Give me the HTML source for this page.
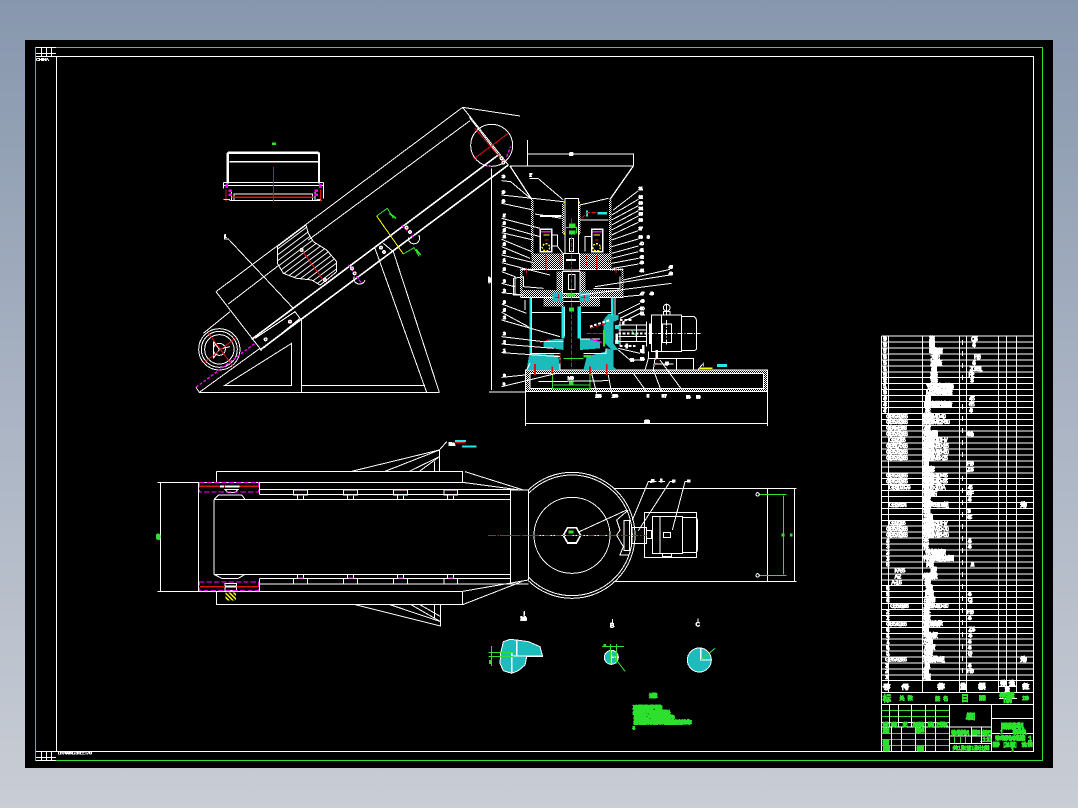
<!DOCTYPE html>
<html lang="zh">
<head>
<meta charset="utf-8">
<title>CAD drawing</title>
<style>
html,body{margin:0;padding:0;width:1078px;height:808px;overflow:hidden;background:linear-gradient(to bottom,#8797ad 0%,#a9b3c3 50%,#c9cdd5 100%)}
svg{position:absolute;left:0;top:0;display:block}
text{font-family:"Liberation Sans","Noto Sans CJK SC",sans-serif;font-weight:bold}
</style>
</head>
<body>
<svg width="1078" height="808" viewBox="0 0 1078 808" xmlns="http://www.w3.org/2000/svg" shape-rendering="crispEdges">
<defs>
<filter id="t" x="-5%" y="-5%" width="110%" height="110%" color-interpolation-filters="sRGB"><feComponentTransfer><feFuncA type="discrete" tableValues="0 1 1 1"/></feComponentTransfer></filter>
<pattern id="chk" width="6" height="6" patternUnits="userSpaceOnUse"><rect width="6" height="6" fill="#000"/><rect width="3" height="3" fill="#fff"/><rect x="3" y="3" width="3" height="3" fill="#fff"/></pattern>
<pattern id="cy" width="6" height="6" patternUnits="userSpaceOnUse"><rect width="6" height="6" fill="#1cbcbc"/></pattern>
<pattern id="hatch" width="14" height="14" patternUnits="userSpaceOnUse" patternTransform="rotate(-37)"><rect width="14" height="14" fill="#000"/><rect width="14" height="3" fill="#fff"/></pattern>
<pattern id="yh" width="9" height="9" patternUnits="userSpaceOnUse" patternTransform="rotate(45)"><rect width="9" height="9" fill="#000"/><rect width="9" height="5" fill="#ff0"/></pattern>
<clipPath id="cc"><rect x="85" y="0" width="800" height="440"/></clipPath>
</defs>
<rect x="25" y="40" width="1028" height="728" fill="#000"/>

<!-- Frames -->
<g fill="none">
<rect x="35.5" y="47.5" width="1007" height="713" stroke="#2fe02f"/>
<rect x="56.5" y="56.5" width="977" height="695" stroke="#fff"/>
<path stroke="#fff" d="M36 47.5H56M36 53.5H56M41.5 48V56M46.5 48V56M51.5 48V56M36 56.5H56M36 751.5H56M36 757.5H56M41.5 752V760M46.5 752V760M51.5 752V760M36 760.5H56"/>
</g>
<g fill="#fff" filter="url(#t)">
<text x="36" y="61" font-size="4.5" textLength="13">CHINA</text>
<text x="58" y="754.5" font-size="4.5" textLength="34">DRAWING SHEET A0</text>
</g>

<!-- Main elevation -->
<g transform="translate(180 100) scale(.33333)" fill="none" stroke="#fff" stroke-width="3">
<path d="M378 375L292 440V490L310 520L350 535L395 540L420 555L440 540L470 515V485L440 450L400 425L385 400Z" fill="url(#hatch)"/>
<path d="M108 575L848 22L1020 48M848 22L985 195M868 52L975 190M108 575L245 752M145 612L295 497M385 420L870 62"/>
<path stroke-width="5" d="M215 718L955 165M240 750L985 195"/>
<path d="M225 715L345 635L360 655L250 745M48 862L58 877H778M58 877L240 745M365 655V877M365 857H735M133 857L335 730V857ZM585 445L740 877M640 455L778 877M610 430L640 455M70 700L150 635"/>
<circle cx="118" cy="748" r="62"/><circle cx="118" cy="748" r="54"/><circle cx="118" cy="748" r="44"/><circle cx="118" cy="748" r="18"/>
<path d="M100 725L118 748M100 775L118 748M150 740L118 748M100 725V775"/>
<circle cx="935" cy="136" r="63"/>
<path d="M133 405V417H145L340 625"/>
<path d="M522 530A17 17 0 1 0 555 540M685 412A17 17 0 1 0 716 405"/>
<path stroke="#e01010" d="M880 178L985 100M885 85L975 190M365 450L430 540M70 790L165 715M85 700L160 800"/>
<path stroke="#f0f" stroke-dasharray="9 5" d="M48 862L225 730M505 495L545 550M665 375L705 415M918 198H935M980 170L992 140" stroke-width="4"/>
<path stroke="#ff0" d="M590 348L670 462"/>
<path stroke="#2fe02f" d="M590 348L622 325L640 355M670 462L702 443L718 470"/>
<path stroke="#2fe02f" stroke-width="5" d="M628 340L648 355M708 448L722 465"/>
<g fill="#e01010" stroke="#fff" stroke-width="4">
<circle cx="365" cy="450" r="4"/><circle cx="435" cy="540" r="4"/><circle cx="680" cy="383" r="4"/><circle cx="690" cy="396" r="4"/><circle cx="516" cy="505" r="4"/><circle cx="524" cy="520" r="4"/><circle cx="603" cy="443" r="4"/><circle cx="612" cy="456" r="4"/><circle cx="330" cy="665" r="4"/><circle cx="257" cy="718" r="4"/><circle cx="965" cy="175" r="4"/><circle cx="970" cy="188" r="4"/>
</g>
</g>

<!-- Cross-section top-left -->
<g transform="translate(190 130) scale(.33333)" fill="none" stroke="#fff" stroke-width="3">
<path stroke-width="7" d="M113 160V74Q113 68 119 68H381Q387 68 387 74V160"/>
<path stroke-width="4" d="M118 95H385"/>
<path d="M100 157H400M100 166H400M100 157V175M400 157V205M132 192H368V212H132ZM118 212H395M125 180V212M375 180V212"/>
<path stroke="#e01010" stroke-width="4" d="M125 202H372"/>
<path stroke="#e01010" d="M250 111V215M108 178V215M391 178V215"/>
<g fill="#f0f" stroke="none"><rect x="107" y="162" width="7" height="12"/><rect x="116" y="178" width="10" height="8"/><rect x="116" y="190" width="10" height="8"/><rect x="374" y="178" width="10" height="8"/><rect x="374" y="190" width="10" height="8"/><rect x="387" y="162" width="7" height="12"/></g>
<path stroke="#ff0" d="M100 208H120M380 208H392"/>
<rect x="246" y="37" width="12" height="8" fill="#2fe02f" stroke="none"/>
</g>
<g fill="#fff" filter="url(#t)"><text x="224" y="238" font-size="5">1</text></g>

<!-- Crusher section -->
<g transform="translate(480 140) scale(.33333)" fill="none" stroke="#fff" stroke-width="3">
<path d="M143 0V80M143 42H460V78M90 78H460"/>
<path stroke-width="4" d="M90 78L155 178M460 78L390 178"/>
<path d="M35 85V750M27 756H136M136 755V858M862 755V858M136 851H862"/>
<g stroke="none" fill="url(#chk)">
<rect x="153" y="178" width="7" height="165"/><rect x="387" y="178" width="7" height="165"/>
<rect x="246" y="190" width="6" height="90"/><rect x="296" y="190" width="6" height="90"/>
<rect x="155" y="340" width="95" height="48"/><rect x="300" y="340" width="95" height="48"/>
<rect x="120" y="386" width="40" height="6"/><rect x="390" y="386" width="40" height="6"/>
<rect x="120" y="388" width="7" height="85"/><rect x="424" y="388" width="7" height="85"/>
<rect x="120" y="450" width="310" height="22"/>
<rect x="230" y="395" width="17" height="55"/><rect x="300" y="395" width="17" height="55"/>
<rect x="190" y="472" width="60" height="28"/><rect x="300" y="472" width="60" height="28"/>
<rect x="136" y="690" width="727" height="9"/><rect x="136" y="745" width="727" height="10"/><rect x="136" y="690" width="14" height="65"/><rect x="850" y="690" width="13" height="65"/>
</g>
<path d="M136 690H863V755H136ZM150 700H850V745H150Z"/>
<path d="M255 175H295V345H255ZM165 222L245 235M300 195L385 175M300 240H385"/>
<path stroke-width="6" d="M180 228H245"/>
<rect x="181" y="268" width="34" height="67" stroke-width="4"/><rect x="335" y="268" width="33" height="67" stroke-width="4"/>
<path d="M215 285H232V318H215M335 290H315V335M232 318L248 340M268 295V335H280V295ZM122 388H430M122 472H430M130 410V440L190 445M130 410L100 415V465H125M420 410V445L340 445"/>
<rect x="250" y="340" width="48" height="50" fill="#000"/>
<path stroke-width="7" d="M258 360H288"/>
<rect x="247" y="395" width="53" height="65" fill="#000"/><rect x="265" y="403" width="20" height="45"/>
<path d="M250 472H300M250 485H300M253 500V590M295 500V590M155 472V640M405 472V525M135 480V510M155 517H245M305 517H395"/>
<!-- cyan -->
<g fill="url(#cy)" stroke="none">
<polygon points="190,605 225,597 250,597 250,630 190,620"/>
<polygon points="300,597 330,597 360,605 360,625 300,630"/>
<polygon points="148,640 235,645 240,690 140,690"/>
<polygon points="380,625 400,630 400,680 412,690 310,690 320,650 375,635"/>
<polygon points="370,540 385,522 415,525 415,540 400,545 400,610 415,630 395,630 370,605"/>
<rect x="218" y="458" width="30" height="28"/><rect x="298" y="458" width="30" height="28"/>
</g>
<g fill="#22e8e8" stroke="none">
<rect x="245" y="500" width="8" height="95"/><rect x="293" y="500" width="10" height="95"/>
<rect x="148" y="472" width="7" height="168"/><rect x="393" y="472" width="7" height="55"/>
<rect x="318" y="212" width="6" height="18"/><rect x="353" y="216" width="28" height="8"/>
<rect x="711" y="672" width="30" height="9"/><rect x="405" y="555" width="12" height="12"/><rect x="405" y="600" width="12" height="12"/>
</g>
<path d="M150 640H240V690M310 640H378V625M140 690L150 670M190 605H250M300 597H360"/>
<!-- red -->
<path stroke="#e01010" stroke-width="5" d="M197 345V390M350 345V390M165 672V705M380 672V705M217 680V700M330 680V705"/>
<path stroke="#e01010" d="M240 345V378M320 345V378M150 365H170M380 365H398M305 235L322 218H350M225 472H245M235 462V482M303 472H323M313 462V482M275 235V690M240 640V670M140 385V405M408 385V405M320 580H372M528 630V670M180 607L215 597M330 565L380 550M195 300H205M345 300H355" stroke-dasharray="14 4"/>
<path stroke="#f0f" stroke-width="4" d="M183 275H213M337 275H366M330 597L365 607"/>
<!-- yellow -->
<path stroke="#ff0" stroke-width="4" d="M190 285H208M340 285H360M660 685H698"/>
<circle cx="198" cy="322" r="11" stroke="#ff0" stroke-width="4" stroke-dasharray="6 4"/><circle cx="350" cy="322" r="11" stroke="#ff0" stroke-width="4" stroke-dasharray="6 4"/>
<g fill="#ff0" stroke="none"><rect x="250" y="184" width="5" height="5"/><rect x="295" y="184" width="5" height="5"/><rect x="250" y="278" width="5" height="5"/><rect x="295" y="278" width="5" height="5"/></g>
<!-- green -->
<g fill="#2fe02f" stroke="none"><rect x="267" y="250" width="20" height="12"/><rect x="267" y="272" width="20" height="12"/><rect x="260" y="460" width="25" height="10"/><rect x="267" y="503" width="15" height="12"/><rect x="310" y="645" width="25" height="8"/><rect x="267" y="725" width="14" height="12"/></g>
<path stroke="#2fe02f" d="M255 262H290V280M250 655H310M217 700V745H330V700M220 735H330M455 572L470 590H475"/>
<path stroke="#2fe02f" stroke-width="5" d="M372 570V620"/>
<!-- gearbox -->
<path d="M415 555H500M415 570H500M415 590H500M415 605H500M420 545V620M500 545V620M470 555V605"/>
<path stroke-width="6" stroke-dasharray="8 5" d="M420 540H455M420 618H470M415 580H500M330 560L390 540"/>
<path stroke-width="5" d="M510 550V612"/>
<path stroke-width="8" d="M430 545V555M410 580V610M440 610V625M490 615V640M530 630V655"/>
<!-- motor -->
<path d="M515 525H605V635H515ZM545 523V635M605 530H642Q650 535 650 545V625Q650 630 642 632H605M548 552H575V607H548ZM560 490V523M550 515H570V525H550ZM505 635V655H640V690M505 655L495 690M525 655L520 690M590 655V690M525 672H580"/>
<circle cx="560" cy="503" r="10"/>
<path stroke-dasharray="16 5 3 5" d="M505 580H662M560 540V620"/>
<path d="M655 688L668 672"/>
<path stroke="#22e8e8" d="M670 668V680"/>
<rect x="555" y="665" width="12" height="10" fill="#fff" stroke="none"/>
<!-- leaders -->
<path d="M65 122L92 125L155 178M65 165L250 185M65 190L160 210M65 235L180 265M65 258L180 290M65 278L160 300M65 298L155 335M65 320L150 355M65 345L160 368M65 368L130 385L210 405M65 395L105 410V465M65 430L103 440M65 458L130 465M65 492L140 520M65 517L145 560M65 540L240 590M65 590L190 605M65 612L220 625M65 638L240 650M65 712L135 705M65 740L230 700M148 116H175L250 180"/>
<path d="M475 152L400 210M475 178L395 225M475 197L395 240M475 212L395 255M475 228L395 270M475 247L395 285M475 272L395 300M475 297L395 320M475 318L395 340M475 335L395 355M475 355L395 370M475 372L400 385M570 388L430 420M570 405L345 440M575 430L300 465M485 465L430 470M480 490L415 522M480 505L420 535M480 520L430 545M480 640L415 625M480 660H450L415 630"/>
<path d="M460 700L500 755M520 690L545 755M540 660L610 755M385 705L395 760M335 700L350 760M175 725L385 722"/>
<g fill="#fff" stroke="#fff" stroke-width="1.2" font-size="15" filter="url(#t)">
<text x="267" y="47" textLength="14">1200</text><text x="147" y="109" textLength="10">17</text>
<text x="65" y="114" textLength="11">30</text><text x="65" y="160" textLength="11">29</text><text x="65" y="187" textLength="11">28</text><text x="68" y="231" textLength="10">27</text><text x="68" y="254" textLength="10">26</text><text x="68" y="274" textLength="10">25</text><text x="68" y="294" textLength="10">24</text><text x="68" y="316" textLength="10">23</text><text x="68" y="340" textLength="10">22</text><text x="68" y="364" textLength="10">21</text><text x="68" y="392" textLength="10">20</text><text x="68" y="427" textLength="10">19</text><text x="68" y="456" textLength="10">18</text>
<text x="68" y="490" textLength="10">16</text><text x="68" y="514" textLength="10">15</text><text x="68" y="537" textLength="10">14</text><text x="68" y="585" textLength="10">13</text><text x="68" y="610" textLength="10">12</text><text x="68" y="636" textLength="10">11</text><text x="68" y="711" textLength="10">10</text><text x="68" y="737" textLength="6">9</text>
<text x="475" y="150" textLength="14">31</text><text x="475" y="175" textLength="14">32</text><text x="475" y="194" textLength="14">33</text><text x="475" y="210" textLength="14">34</text><text x="475" y="226" textLength="14">35</text><text x="475" y="245" textLength="14">36</text><text x="475" y="270" textLength="14">37</text><text x="475" y="295" textLength="14">38</text><text x="500" y="295" textLength="10">39</text><text x="478" y="315" textLength="14">40</text><text x="478" y="335" textLength="14">41</text><text x="478" y="355" textLength="14">42</text><text x="478" y="372" textLength="14">43</text><text x="478" y="396" textLength="14">44</text>
<text x="565" y="385" textLength="14">45</text><text x="565" y="405" textLength="14">46</text><text x="480" y="465" textLength="14">47</text><text x="508" y="465" textLength="14">48</text><text x="480" y="487" textLength="14">49</text><text x="480" y="510" textLength="14">50</text><text x="480" y="525" textLength="14">51</text><text x="480" y="637" textLength="14">52</text><text x="480" y="662" textLength="14">53</text><text x="450" y="665" textLength="12">54</text>
<text x="345" y="772" textLength="20">1.55</text><text x="395" y="772" textLength="20">1.56</text><text x="500" y="772" textLength="14">5</text><text x="545" y="772" textLength="16">57</text><text x="618" y="775" textLength="14">58</text><text x="648" y="775" textLength="14">59</text><text x="492" y="849" textLength="18">2300</text>
<text transform="translate(34 430) rotate(-90)" textLength="20">1967</text>
<text x="555" y="677" textLength="10">4</text>
<text x="262" y="718" textLength="20">M30</text>
</g>
</g>

<!-- Plan view left -->
<g transform="translate(150 440) scale(.33333)" fill="none" stroke="#fff" stroke-width="3">
<path d="M22 127H938M22 454H938M31 127V454M146 127V454M200 94H938V127M200 94V127M200 454V494H938V454"/>
<path d="M938 127L1110 150M945 95L1120 150M938 454L1135 420M938 494L1115 425"/>
<path d="M328 148H1082M328 163H1082M192 178H1082M192 403H1082M328 415H1082M328 432H1082M1082 148V432M1135 150V420M1082 150H1135M1082 432H1135M192 178V403M328 127V163M328 415V454"/>
<path d="M192 178L205 165H275L285 178M192 403L215 415H265L285 403M225 148H265L255 158H235ZM225 430H260V452H225Z"/>
<path d="M430 150H472V165H430ZM443 165V178M461 165V178M580 150H622V165H580ZM593 165V178M611 165V178M730 150H772V165H730ZM743 165V178M761 165V178M882 150H922V165H882ZM893 165V178M911 165V178"/>
<path d="M430 415H472V432H430ZM443 403V415M461 403V415M580 415H622V432H580ZM593 403V415M611 403V415M730 415H772V432H730ZM743 403V415M761 403V415M882 415H922V432H882ZM893 403V415M911 403V415"/>
<path stroke="#f0f" d="M445 166H460M595 166H610M745 166H760M895 166H910M445 414H460M595 414H610M745 414H760M895 414H910"/>
<path d="M605 94L868 30V94M705 94L868 30M778 94L868 50M808 94L868 50M853 94V65M615 494L872 558V494M720 494L872 545M783 494L872 545M810 494L872 530M853 494V535"/>
<rect x="148" y="128" width="177" height="28" stroke="#f0f" stroke-dasharray="16 6"/>
<rect x="148" y="426" width="177" height="26" stroke="#f0f" stroke-dasharray="16 6"/>
<path stroke="#e01010" stroke-width="4" d="M150 139H325M150 440H325"/>
<path stroke="#fff" stroke-width="6" d="M210 140H222M225 139H268M225 440H260"/>
<rect x="227" y="458" width="31" height="24" fill="url(#yh)" stroke="none"/>
<path stroke="#e01010" stroke-dasharray="24 4 5 4" d="M1014 286H1160"/>
<path stroke="#e01010" d="M870 28L890 5"/>
<path d="M868 30L890 5"/>
<path stroke="#22e8e8" stroke-width="6" d="M915 3H948M936 19H980"/>
<path stroke="#e01010" d="M915 8H945"/>
<g fill="#fff" font-size="15" filter="url(#t)" stroke="#fff"><text x="896" y="16" textLength="18">Ra</text><text x="1112" y="541" textLength="18">1:10</text></g>
<text transform="translate(29 298) rotate(-90)" fill="#2fe02f" stroke="#2fe02f" font-size="15" textLength="16" filter="url(#t)">880</text>
<path d="M1122 515V528"/>
</g>

<!-- Plan view right -->
<g transform="translate(500 460) scale(.33333)" fill="none" stroke="#fff" stroke-width="3">
<g clip-path="url(#cc)"><circle cx="216" cy="226" r="189"/><circle cx="216" cy="226" r="181"/></g>
<circle cx="216" cy="226" r="114"/>
<polygon points="190,226 203,203 229,203 242,226 229,249 203,249" stroke-width="5"/>
<rect x="206" y="211" width="14" height="10" fill="#2fe02f" stroke="none"/>
<path d="M340 85H890M340 364H890M803 85V364M883 85V364M85 90V360"/>
<path d="M433 157H590V292H433ZM457 170H548V280H457ZM480 170V280M548 172H585Q592 172 592 180V270Q592 278 585 278H548M395 202H440V250H395ZM440 212H455V235H440ZM372 182H388V272H372ZM488 280V290H515V280M490 218H512V232H490Z"/>
<path d="M385 150L350 180L360 210L350 226L370 260L360 285H385M397 180L445 65H470M415 212L510 65H525M517 210L555 65H570M238 215L380 150M475 65H495"/>
<path d="M110 226H322"/>
<path stroke="#e01010" stroke-dasharray="20 4 5 4" d="M0 226H440"/>
<path stroke="#2fe02f" d="M775 103H860M775 346H860M851 107V343"/>
<circle cx="773" cy="103" r="5"/><circle cx="773" cy="346" r="5"/>
<g fill="#2fe02f" stroke="none"><rect x="845" y="220" width="8" height="10"/><rect x="870" y="220" width="8" height="10"/></g>
<g fill="#fff" stroke="none"><rect x="453" y="57" width="10" height="10"/><rect x="480" y="55" width="8" height="12"/><rect x="516" y="58" width="10" height="9"/><rect x="561" y="58" width="10" height="9"/></g>
</g>
<g fill="#fff" font-size="4" filter="url(#t)"><text x="650" y="483" textLength="4">8</text><text x="672" y="483" textLength="4">6</text></g>

<!-- Section details -->
<g transform="translate(470 600) scale(.33333)" fill="none" stroke="#fff" stroke-width="3">
<polygon points="92,160 100,125 120,118 140,120 175,125 210,140 218,170 170,170 165,195 145,212 125,220 100,212 90,190" fill="#1cbcbc" stroke="#fff"/>
<path stroke-width="4" d="M140 120V168H218M125 158V218M125 168H170"/>
<path stroke="#2fe02f" d="M55 157H130M55 170H130M65 138V198"/>
<rect x="57" y="180" width="7" height="12" fill="#2fe02f" stroke="none"/>
<circle cx="424" cy="172" r="21" fill="#1cbcbc"/>
<path stroke-width="4" d="M424 150V190M424 172H445"/>
<path stroke="#2fe02f" d="M396 139H462M421 132V190M439 132V190M424 160L466 215"/>
<circle cx="688" cy="180" r="36" fill="#1cbcbc"/>
<path stroke-width="4" d="M692 146V180H724"/>
<path stroke="#2fe02f" d="M692 180L735 145"/>
<g stroke="#fff" stroke-width="1" fill="#fff" font-size="18" filter="url(#t)"><text x="150" y="62" textLength="20">1:1</text><text x="420" y="82" textLength="14">B</text><text x="677" y="80" textLength="14">C</text></g>
<path d="M163 33V46M427 57V72M684 55V66"/>
<rect x="401" y="132" width="7" height="6" fill="#2fe02f" stroke="none"/>
<g fill="#2fe02f" stroke="#2fe02f" stroke-width="1.5" font-size="15" filter="url(#t)">
<text x="537" y="292" textLength="26">技术要求</text>
<text x="488" y="329" textLength="88">1.减速器装配前零件清洗</text>
<text x="488" y="344" textLength="115">2.各密封处不得有漏油现象处</text>
<text x="490" y="358" textLength="125">3.轴承装配后应转动灵活无卡</text>
<text x="490" y="372" textLength="175">4.齿轮啮合侧隙符合要求并检验合格后运转试车</text>
<text x="487" y="388" textLength="8">5.</text>
</g>
</g>

<!-- Parts table -->
<g stroke="#fff" fill="none">
<path d="M881.5 336H1033.5M881.5 342H1033.5M881.5 348H1033.5M881.5 354H1033.5M881.5 360H1033.5M881.5 366H1033.5M881.5 372H1033.5M881.5 377.5H1033.5M881.5 383.5H1033.5M881.5 389.5H1033.5M881.5 395.5H1033.5M881.5 401.5H1033.5M881.5 407.5H1033.5M881.5 413.5H1033.5M881.5 419.5H1033.5M881.5 425.5H1033.5M881.5 431H1033.5M881.5 437H1033.5M881.5 443H1033.5M881.5 449H1033.5M881.5 455H1033.5M881.5 461H1033.5M881.5 467H1033.5M881.5 473H1033.5M881.5 478.5H1033.5M881.5 484.5H1033.5M881.5 490.5H1033.5M881.5 496.5H1033.5M881.5 502.5H1033.5M881.5 508.5H1033.5M881.5 514.5H1033.5M881.5 520.5H1033.5M881.5 526H1033.5M881.5 532H1033.5M881.5 538H1033.5M881.5 544H1033.5M881.5 550H1033.5M881.5 556H1033.5M881.5 562H1033.5M881.5 568H1033.5M881.5 574H1033.5M881.5 580H1033.5M881.5 585.5H1033.5M881.5 591.5H1033.5M881.5 597.5H1033.5M881.5 603.5H1033.5M881.5 609.5H1033.5M881.5 615.5H1033.5M881.5 621.5H1033.5M881.5 627.5H1033.5M881.5 633.5H1033.5M881.5 639H1033.5M881.5 645H1033.5M881.5 651H1033.5M881.5 657H1033.5M881.5 663H1033.5M881.5 669H1033.5M881.5 675H1033.5M881.5 680.5H1033.5"/>
<path d="M881.5 336V751.5M888.5 336V692M922.5 336V692M959.5 336V692M966.5 336V692M998.5 336V692M1006.5 336V692M1016.5 336V692M1033.5 336V751.5M881.5 692.5H1033.5M881.5 704.5H1033.5M881.5 751.5H1033.5M998.5 686.5H1016.5"/>
</g>
<g fill="#fff" stroke="#fff" stroke-width=".3" font-size="6" filter="url(#t)">
<text x="929" y="341.2" textLength="6">底板</text><text x="971" y="341.2" textLength="7">Q235</text><text x="883" y="341.2" textLength="4">59</text>
<text x="929" y="347.1" textLength="6">轴承</text><text x="972" y="347.1" textLength="4">45</text><text x="883" y="347.1" textLength="4">58</text>
<text x="929" y="353" textLength="14">联轴器套</text><text x="883" y="353" textLength="4">57</text>
<text x="930.3" y="359" textLength="10">大带轮</text><text x="974" y="359" textLength="7">HT20</text><text x="883" y="359" textLength="4">56</text>
<text x="930.3" y="364.9" textLength="12">减速机座</text><text x="972" y="364.9" textLength="4">45</text><text x="883" y="364.9" textLength="4">55</text>
<text x="931" y="370.8" textLength="5">轴</text><text x="969.5" y="370.8" textLength="13">ZG35-1</text><text x="883" y="370.8" textLength="4">54</text>
<text x="930.3" y="376.8" textLength="8">端盖</text><text x="968.5" y="376.8" textLength="6">HT2</text><text x="883" y="376.8" textLength="4">53</text>
<text x="930.3" y="382.7" textLength="8">锁母</text><text x="970" y="382.7" textLength="4">35</text><text x="883" y="382.7" textLength="4">52</text>
<text x="926" y="388.6" textLength="28">YB型电动机联轴器</text><text x="883" y="388.6" textLength="4">51</text>
<text x="926" y="394.5" textLength="27">M12×1.5螺母组合</text><text x="883" y="394.5" textLength="4">50</text>
<text x="925" y="400.5" textLength="6">挡圈</text><text x="969" y="400.5" textLength="6">45</text><text x="883" y="400.5" textLength="4">49</text>
<text x="923.7" y="406.4" textLength="29">H型弹性套柱销组合</text><text x="968.7" y="406.4" textLength="6">65</text><text x="883" y="406.4" textLength="4">48</text>
<text x="925" y="412.3" textLength="5">轮</text><text x="969" y="412.3" textLength="4">40</text><text x="883" y="412.3" textLength="4">47</text>
<text x="886" y="418.3" textLength="22">GB5782-86</text><text x="923" y="418.3" textLength="23">螺栓M10×40</text>
<text x="886" y="424.2" textLength="22">GB5782-86</text><text x="923" y="424.2" textLength="27">螺栓M12×50</text>
<text x="886" y="430.1" textLength="21">GB4 MBT-8</text><text x="923" y="430.1" textLength="8">油封</text>
<text x="886" y="436.1" textLength="22">GB5782-86</text><text x="923" y="436.1" textLength="15">弹簧垫圈</text><text x="967" y="436.1" textLength="7">65Mn</text>
<text x="888.7" y="442" textLength="17">GB97.1-85</text><text x="923" y="442" textLength="25">垫圈 10 100HV</text>
<text x="886" y="447.9" textLength="22">GB6170-86</text><text x="923" y="447.9" textLength="26">螺母M30×1.5</text>
<text x="886" y="453.8" textLength="22">GB5782-86</text><text x="923" y="453.8" textLength="26">螺栓M16×60</text>
<text x="886" y="459.8" textLength="22">GB5782-86</text><text x="923" y="459.8" textLength="25">螺栓M8×25</text>
<text x="923" y="465.7" textLength="6">顶盖</text><text x="967" y="465.7" textLength="7">HT20</text>
<text x="923" y="471.6" textLength="12">固定锥套</text><text x="967" y="471.6" textLength="7">ZG35</text>
<text x="886" y="477.6" textLength="22">GB5782-86</text><text x="923" y="477.6" textLength="25">螺栓M10×45</text>
<text x="886" y="483.5" textLength="22">GB5782-86</text><text x="923" y="483.5" textLength="25">螺栓M12×35</text>
<text x="888.7" y="489.4" textLength="22">GB1096-79</text><text x="923" y="489.4" textLength="23">键 16×100 A</text><text x="967.7" y="489.4" textLength="5">45</text>
<text x="923" y="495.3" textLength="15">调整垫片</text><text x="967" y="495.3" textLength="7">08F</text>
<text x="923" y="501.3" textLength="8">隔套</text><text x="967.7" y="501.3" textLength="4">45</text>
<text x="888.7" y="507.2" textLength="18">GB276-94</text><text x="923" y="507.2" textLength="26">轴承6310 1组</text><text x="1020" y="507.2" textLength="7">外购</text>
<text x="923" y="513.1" textLength="8">套筒</text><text x="967" y="513.1" textLength="4">35</text>
<text x="923" y="519.1" textLength="10">主轴</text><text x="967" y="519.1" textLength="5">40Cr</text>
<text x="888.7" y="525" textLength="17">GB97.1-85</text><text x="923" y="525" textLength="25">垫圈 12 100HV</text>
<text x="886" y="530.9" textLength="22">GB5782-86</text><text x="923" y="530.9" textLength="26">螺栓M20×70</text>
<text x="886" y="536.9" textLength="22">GB5782-86</text><text x="923" y="536.9" textLength="26">螺栓M16×50</text>
<text x="886" y="542.8" textLength="3">34</text><text x="923" y="542.8" textLength="5">壳</text><text x="967.7" y="542.8" textLength="4">45</text>
<text x="886" y="548.7" textLength="3">33</text><text x="923" y="548.7" textLength="6">筒体</text><text x="967.7" y="548.7" textLength="4">45</text>
<text x="886" y="554.6" textLength="3">32</text><text x="925" y="554.6" textLength="21">带式输送机架</text>
<text x="886" y="560.6" textLength="3">31</text><text x="923" y="560.6" textLength="31">传动滚筒组件 总成图</text>
<text x="886" y="566.5" textLength="3">30</text><text x="926" y="566.5" textLength="8">托辊</text><text x="970.3" y="566.5" textLength="4">A3</text>
<text x="894.3" y="572.4" textLength="11">KA-85</text><text x="930.3" y="572.4" textLength="7">皮带</text>
<text x="894.3" y="578.4" textLength="7">A-2</text><text x="923" y="578.4" textLength="15">螺旋涨紧</text>
<text x="891" y="584.3" textLength="11">A-1.6</text><text x="924.3" y="584.3" textLength="7">机架</text>
<text x="886" y="590.2" textLength="3">26</text><text x="925" y="590.2" textLength="8">支腿</text>
<text x="886" y="596.1" textLength="3">25</text><text x="923" y="596.1" textLength="11">下托辊</text><text x="967.7" y="596.1" textLength="4">45</text>
<text x="886" y="602.1" textLength="3">24</text><text x="923.7" y="602.1" textLength="12">改向滚筒</text><text x="967.7" y="602.1" textLength="5">Q2</text>
<text x="890" y="608" textLength="19">GB5782-86</text><text x="923.7" y="608" textLength="25">螺栓M10×30</text>
<text x="886" y="613.9" textLength="3">22</text><text x="923" y="613.9" textLength="8">落料斗</text><text x="967" y="613.9" textLength="7">HT20</text>
<text x="886" y="619.9" textLength="3">21</text><text x="923" y="619.9" textLength="8">护板</text><text x="967.7" y="619.9" textLength="4">45</text>
<text x="886" y="625.8" textLength="21">GB5782-86</text><text x="923" y="625.8" textLength="20">调心滚子轴承</text>
<text x="886" y="631.7" textLength="3">19</text><text x="923" y="631.7" textLength="6">锥套</text><text x="968.3" y="631.7" textLength="7">ZG35</text>
<text x="886" y="637.7" textLength="3">18</text><text x="923" y="637.7" textLength="15">动锥衬板</text><text x="968.3" y="637.7" textLength="4">45</text>
<text x="886" y="643.6" textLength="3">17</text><text x="923" y="643.6" textLength="10">定锥</text><text x="967.7" y="643.6" textLength="4">45</text>
<text x="886" y="649.5" textLength="3">16</text><text x="923.7" y="649.5" textLength="12">定锥衬板</text><text x="967.7" y="649.5" textLength="4">45</text>
<text x="886" y="655.4" textLength="3">15</text><text x="923" y="655.4" textLength="10">支架</text><text x="967.7" y="655.4" textLength="4">Q2</text>
<text x="885" y="661.4" textLength="22">GB5782-86</text><text x="923" y="661.4" textLength="22">滚动轴承7320组</text><text x="1020" y="661.4" textLength="7">外购</text>
<text x="885" y="667.3" textLength="3">13</text><text x="924.3" y="667.3" textLength="6">压盖</text><text x="967.7" y="667.3" textLength="4">45</text>
<text x="885" y="673.2" textLength="3">12</text><text x="923" y="673.2" textLength="6">油杯</text><text x="967" y="673.2" textLength="7">HT20</text>
<text x="885" y="679.2" textLength="3">11</text><text x="923" y="679.2" textLength="8">底座</text>
</g>
<path stroke="#fff" d="M962.5 340V345M962.5 351V356M962.5 363V368M962.5 375V380M962.5 404V409M962.5 416V421M962.5 428V433M962.5 440V445M962.5 452V457M962.5 476V481M962.5 488V493M962.5 500V505M962.5 512V517M962.5 524V529M962.5 536V541M962.5 548V553M962.5 560V565M962.5 572V577M962.5 584V589M962.5 596V601M962.5 608V613M962.5 620V625M962.5 632V637M962.5 644V649M962.5 656V661M962.5 668V673" fill="none"/>

<!-- Title block -->
<g transform="translate(876 525) scale(.33333)" fill="none" stroke="#fff" stroke-width="3">
<path stroke="#2fe02f" d="M16 556H220M16 574H220M16 625H220M16 643H220M16 661H220M235 636V654M253 636V654M268 636V654M312 650H346"/>
<path d="M40 538V606M68 538V606M106 538V606M148 538V606M178 538V606M16 592H220M16 606H220M46 606V680M76 606V680M118 606V680M148 606V680M178 606V680M220 538V680M346 538V680M220 606H346M220 633H346M220 655H346M286 606V655M316 606V655M346 580H471M346 625H471M369 520H423"/>
<g fill="#fff" stroke="#fff" stroke-width="1.2" font-size="19" filter="url(#t)">
<text x="20" y="492" textLength="14">序号</text><text x="76" y="492" textLength="24">代号</text><text x="183" y="490" textLength="24">名称</text><text x="252" y="490" textLength="17">数量</text><text x="306" y="490" textLength="24">材料</text><text x="372" y="482" textLength="18">单件</text><text x="398" y="482" textLength="18">总计</text><text x="386" y="500" font-size="15" textLength="16">重量</text><text x="438" y="490" textLength="22">备注</text>
</g>
<g fill="#2fe02f" stroke="#2fe02f" stroke-width="1.2" font-size="16" filter="url(#t)">
<text x="20" y="530" font-size="26" textLength="13">标</text><text x="70" y="525" textLength="11">处</text><text x="95" y="525" textLength="10">数</text><text x="177" y="526" textLength="10">签</text><text x="201" y="526" textLength="12">名</text><text x="255" y="528" font-size="24" textLength="12">日</text><text x="309" y="525" textLength="21">阶段</text><text x="370" y="516" textLength="46">标记 重量</text><text x="382" y="533" textLength="26">比例</text><text x="438" y="525" textLength="21">1:10</text>
<text x="20" y="605" textLength="20">设计</text><text x="44" y="605" textLength="20">审核</text><text x="78" y="605" textLength="18">工艺</text><text x="110" y="605" textLength="36">标准化审</text><text x="155" y="605" textLength="19">批准</text><text x="180" y="605" textLength="36">日 期 年</text>
<text x="20" y="623" textLength="20">描图</text><text x="118" y="623" textLength="28">图样</text><text x="20" y="658" textLength="20">校对</text><text x="20" y="676" textLength="22">日期</text><text x="122" y="676" textLength="22">制图</text>
<text x="268" y="582" font-size="22" textLength="30">总图</text>
<text x="225" y="628" textLength="55">锥式破碎机</text><text x="288" y="628" textLength="26">图样</text><text x="318" y="628" textLength="27">标记</text><text x="320" y="650" textLength="26">1:10</text>
<text x="230" y="675" textLength="110">共 1 张 第 1 张 比例</text>
<text x="375" y="610" font-size="20" textLength="70">圆锥破碎机</text><text x="372" y="627" textLength="6">1</text><text x="410" y="627" textLength="42">破碎机</text>
<text x="357" y="645" textLength="91">锥式破碎机装配图</text><text x="456" y="648" font-size="22" textLength="6">1</text>
<text x="350" y="664" textLength="22">图号</text><text x="382" y="664" textLength="40">[总图]</text><text x="436" y="664" textLength="34">设计院</text><text x="405" y="680" textLength="8">1</text>
</g>
</g>
</svg>
</body>
</html>
